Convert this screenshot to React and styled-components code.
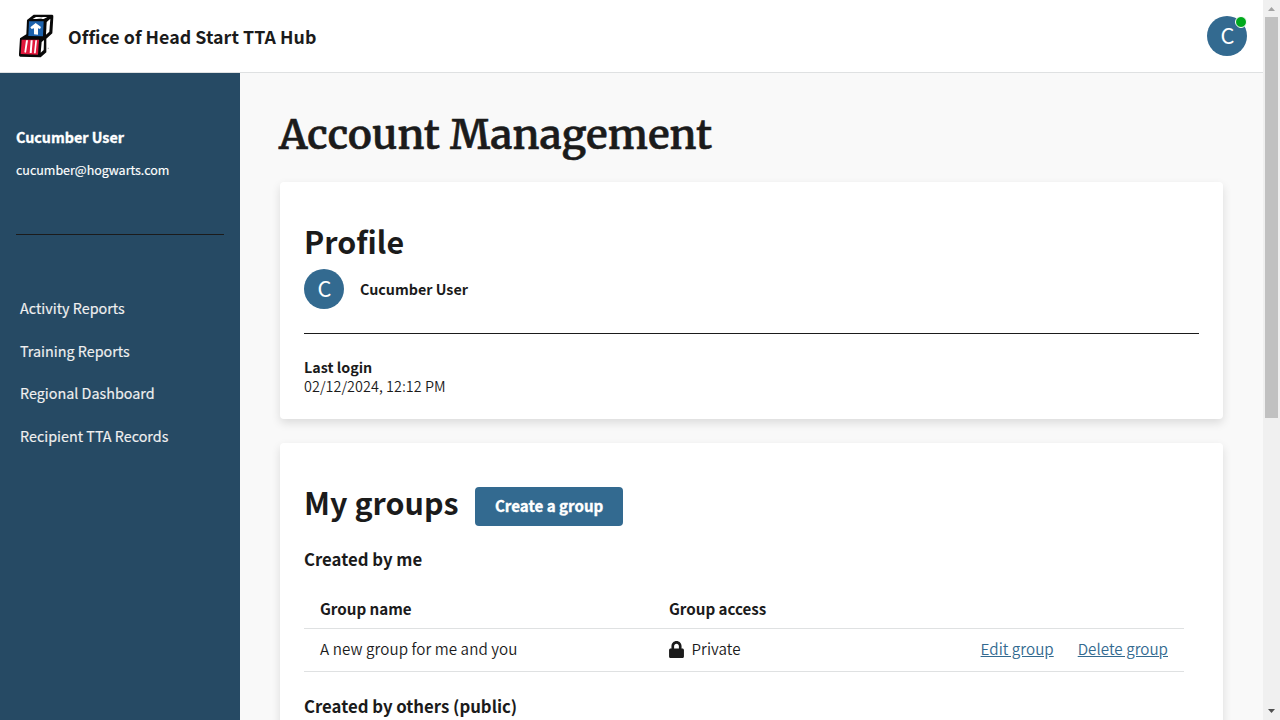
import React from 'react';
import styled, { createGlobalStyle } from 'styled-components';
import { FaLock } from 'react-icons/fa';

const GlobalStyle = createGlobalStyle`
  *, *::before, *::after { box-sizing: border-box; }
  html, body { margin: 0; height: 100%; overflow: hidden; }
  body {
    background: #f9f9f9;
    color: #1b1b1b;
    font-family: "Source Sans Pro", "Noto Sans CJK SC", "Noto Sans", sans-serif;
  }
  h1, h2, h3, p, ul, hr { margin: 0; padding: 0; }
`;

const Window = styled.div`
  display: flex;
  width: 1280px;
  height: 720px;
  overflow: hidden;
`;

const Page = styled.div`
  flex: 1;
  min-width: 0;
  display: flex;
  flex-direction: column;
`;

const Header = styled.header`
  flex: none;
  display: flex;
  align-items: center;
  height: 73px;
  padding: 0 16px 0 10px;
  background: #fff;
  border-bottom: 1px solid #dfe1e2;
`;

const Logo = styled.svg`
  width: 54px;
  height: 54px;
  margin: 0 4px 2px 0;
`;

const SiteName = styled.div`
  flex: 1;
  font-size: 17.8px;
  font-weight: 700;
  line-height: 28px;
  letter-spacing: 0.04px;
`;

const Avatar = styled.div`
  position: relative;
  flex: none;
  display: flex;
  align-items: center;
  justify-content: center;
  width: 40px;
  height: 40px;
  padding: 0 0 3px 1px;
  border-radius: 50%;
  background: #336a90;
  color: #fff;
  font-size: 21.8px;
  line-height: 30px;
`;

const OnlineDot = styled.span`
  position: absolute;
  top: 0;
  right: 0;
  width: 12px;
  height: 12px;
  border: 1px solid #fff;
  border-radius: 50%;
  background: #00a91c;
`;

const Body = styled.div`
  flex: 1;
  min-height: 0;
  display: flex;
`;

const Sidebar = styled.aside`
  flex: none;
  width: 240px;
  padding: 54px 16px 0;
  background: #264a64;
  color: #fff;
`;

const SidebarName = styled.p`
  font-size: 14.3px;
  font-weight: 700;
  line-height: 20px;
  -webkit-text-stroke: 0.35px #fff;
`;

const SidebarEmail = styled.p`
  margin-top: 13px;
  font-size: 12.5px;
  line-height: 20px;
  letter-spacing: -0.02px;
  -webkit-text-stroke: 0.15px #fff;
`;

const Divider = styled.hr`
  height: 1px;
  border: 0;
  background: #1b1b1b;
  margin: ${({ $gap }) => $gap};
`;

const NavList = styled.ul`
  list-style: none;
`;

const NavItem = styled.li`
  height: 42.67px;
  padding-left: 4px;
  color: #f0f0f0;
  font-size: 14.35px;
  line-height: 42.67px;
  white-space: nowrap;
  -webkit-text-stroke: 0.15px #f0f0f0;
`;

const Main = styled.main`
  flex: 1;
  min-width: 0;
  padding: 36px 40px 0;
  overflow: hidden;
`;

const PageTitle = styled.h1`
  height: 49px;
  margin: 0 0 24px -1px;
  font-family: Merriweather, "DejaVu Serif", serif;
  font-size: 40.2px;
  font-weight: 600;
  line-height: 52px;
  letter-spacing: 0.27px;
  white-space: nowrap;
  -webkit-text-stroke: 0.6px #1b1b1b;
`;

const Card = styled.section`
  height: ${({ $height }) => $height};
  margin-bottom: 24px;
  padding: 39px 24px 0;
  border-radius: 4px;
  background: #fff;
  box-shadow: 0 4px 10px rgba(0, 0, 0, 0.12);
`;

const CardTitle = styled.h2`
  font-size: 30.4px;
  font-weight: 700;
  line-height: 40px;
  letter-spacing: 0.05px;
  white-space: nowrap;
`;

const ProfileRow = styled.div`
  display: flex;
  align-items: center;
  gap: 16px;
  margin-top: 8px;
`;

const Strong = styled.p`
  font-size: 14.3px;
  font-weight: 700;
  line-height: 19px;
`;

const ProfileName = styled(Strong)`
  padding-bottom: 1px;
  line-height: 18px;
`;

const LoginDate = styled.p`
  font-size: 14.4px;
  font-weight: 350;
  line-height: 19px;
  letter-spacing: 0.04px;
`;

const TitleRow = styled.div`
  display: flex;
  align-items: flex-start;
  gap: 16px;
`;

const Button = styled.button`
  width: 148px;
  height: 39px;
  margin-top: 5px;
  padding: 0 0 3px 1px;
  border: 0;
  border-radius: 4px;
  background: #336a90;
  color: #fff;
  font-family: inherit;
  font-size: 15.1px;
  font-weight: 700;
  line-height: 20px;
  white-space: nowrap;
  -webkit-text-stroke: 0.35px #fff;
`;

const SubTitle = styled.h3`
  margin-top: ${({ $top }) => $top};
  font-size: 16.75px;
  font-weight: 700;
  line-height: 24px;
`;

const Table = styled.div`
  width: 880px;
`;

const Row = styled.div`
  display: grid;
  grid-template-columns: 349px 1fr auto;
  align-items: center;
  height: ${({ $head }) => ($head ? '58px' : '43px')};
  padding: ${({ $head }) => ($head ? '17px 16px 0' : '0 16px 4px')};
  border-bottom: 1px solid #dfe1e2;
  font-size: 15.2px;
  font-weight: ${({ $head }) => ($head ? 700 : 350)};
  line-height: 22px;
  letter-spacing: ${({ $head }) => ($head ? '-0.03px' : '0.07px')};
`;

const LockIcon = styled(FaLock)`
  width: 15px;
  height: 17px;
  margin-top: 2px;
`;

const Access = styled.span`
  display: flex;
  align-items: center;
  gap: 7.5px;
`;

const Actions = styled.span`
  display: flex;
  gap: 24px;
`;

const ActionLink = styled.a`
  color: #336a90;
  letter-spacing: 0.03px;
  text-decoration: underline;
`;

const ScrollTrack = styled.div`
  flex: none;
  display: flex;
  flex-direction: column;
  align-items: center;
  justify-content: space-between;
  width: 17px;
  background: #f0f0f0;
`;

const ScrollThumb = styled.div`
  width: 13px;
  height: 401px;
  margin-bottom: auto;
  background: #c1c1c1;
`;

const ScrollArrow = styled.svg`
  width: 17px;
  height: 17px;
`;

const navigation = ['Activity Reports', 'Training Reports', 'Regional Dashboard', 'Recipient TTA Records'];

function BlocksLogo() {
  return (
    <Logo viewBox="0 0 162 162" aria-hidden="true">
      <path d="M51 36 L71 20 L127 20 Q131 21 130 26 L127 76 L109 92 L109 133 L92 148 L30 146 Q26 145 27 138 L30 91 L49 79 Z" fill="#080808" />
      <path d="M68 33 L78 27 L112 27 L101 33 Z" fill="#fff" />
      <path d="M80 31 L98 28 L94 33 Z" fill="#222" opacity=".45" />
      <path d="M110 42 L121 32 L118 71 L108 80 Z" fill="#fff" />
      <path d="M57 40 L101 40 L99 85 L55 84 Z" fill="#1c62ad" />
      <path d="M77 45 L93 57 L90 63 L84 61 L84 80 L72 79 L72 61 L65 63 L61 58 Z" fill="#fff" />
      <path d="M35 95 L87 95 L84 140 L32 138 Z" fill="#e0183c" />
      <path d="M48 97 L54 97 L48 134 L43 133 Z M62 97 L68 97 L65 135 L59 135 Z M76 97 L81 97 L77 136 L72 136 Z" fill="#fff" />
      <path d="M95 102 L102 96 L101 126 L92 134 Z" fill="#fff" />
      <path d="M113 121 L117 121" stroke="#888" strokeWidth="2" />
    </Logo>
  );
}

export default function App() {
  return (
    <>
      <GlobalStyle />
      <Window>
        <Page>
          <Header>
            <BlocksLogo />
            <SiteName>Office of Head Start TTA Hub</SiteName>
            <Avatar>
              C<OnlineDot />
            </Avatar>
          </Header>
          <Body>
            <Sidebar>
              <SidebarName>Cucumber User</SidebarName>
              <SidebarEmail>cucumber@hogwarts.com</SidebarEmail>
              <Divider $gap="54px 0 52px" />
              <NavList>
                {navigation.map((label) => (
                  <NavItem key={label}>{label}</NavItem>
                ))}
              </NavList>
            </Sidebar>
            <Main>
              <PageTitle>Account Management</PageTitle>
              <Card $height="237px">
                <CardTitle>Profile</CardTitle>
                <ProfileRow>
                  <Avatar>C</Avatar>
                  <ProfileName>Cucumber User</ProfileName>
                </ProfileRow>
                <Divider $gap="24px 0 23px" />
                <Strong>Last login</Strong>
                <LoginDate>02/12/2024, 12:12 PM</LoginDate>
              </Card>
              <Card $height="400px">
                <TitleRow>
                  <CardTitle>My groups</CardTitle>
                  <Button>Create a group</Button>
                </TitleRow>
                <SubTitle $top="21px">Created by me</SubTitle>
                <Table>
                  <Row $head>
                    <span>Group name</span>
                    <span>Group access</span>
                  </Row>
                  <Row>
                    <span>A new group for me and you</span>
                    <Access>
                      <LockIcon />
                      Private
                    </Access>
                    <Actions>
                      <ActionLink>Edit group</ActionLink>
                      <ActionLink>Delete group</ActionLink>
                    </Actions>
                  </Row>
                </Table>
                <SubTitle $top="22px">Created by others (public)</SubTitle>
              </Card>
            </Main>
          </Body>
        </Page>
        <ScrollTrack>
          <ScrollArrow viewBox="0 0 17 17">
            <path d="M5 11 L8.5 7 L12 11 Z" fill="#a3a3a3" />
          </ScrollArrow>
          <ScrollThumb />
          <ScrollArrow viewBox="0 0 17 17">
            <path d="M5 6 L12 6 L8.5 10 Z" fill="#505050" />
          </ScrollArrow>
        </ScrollTrack>
      </Window>
    </>
  );
}
